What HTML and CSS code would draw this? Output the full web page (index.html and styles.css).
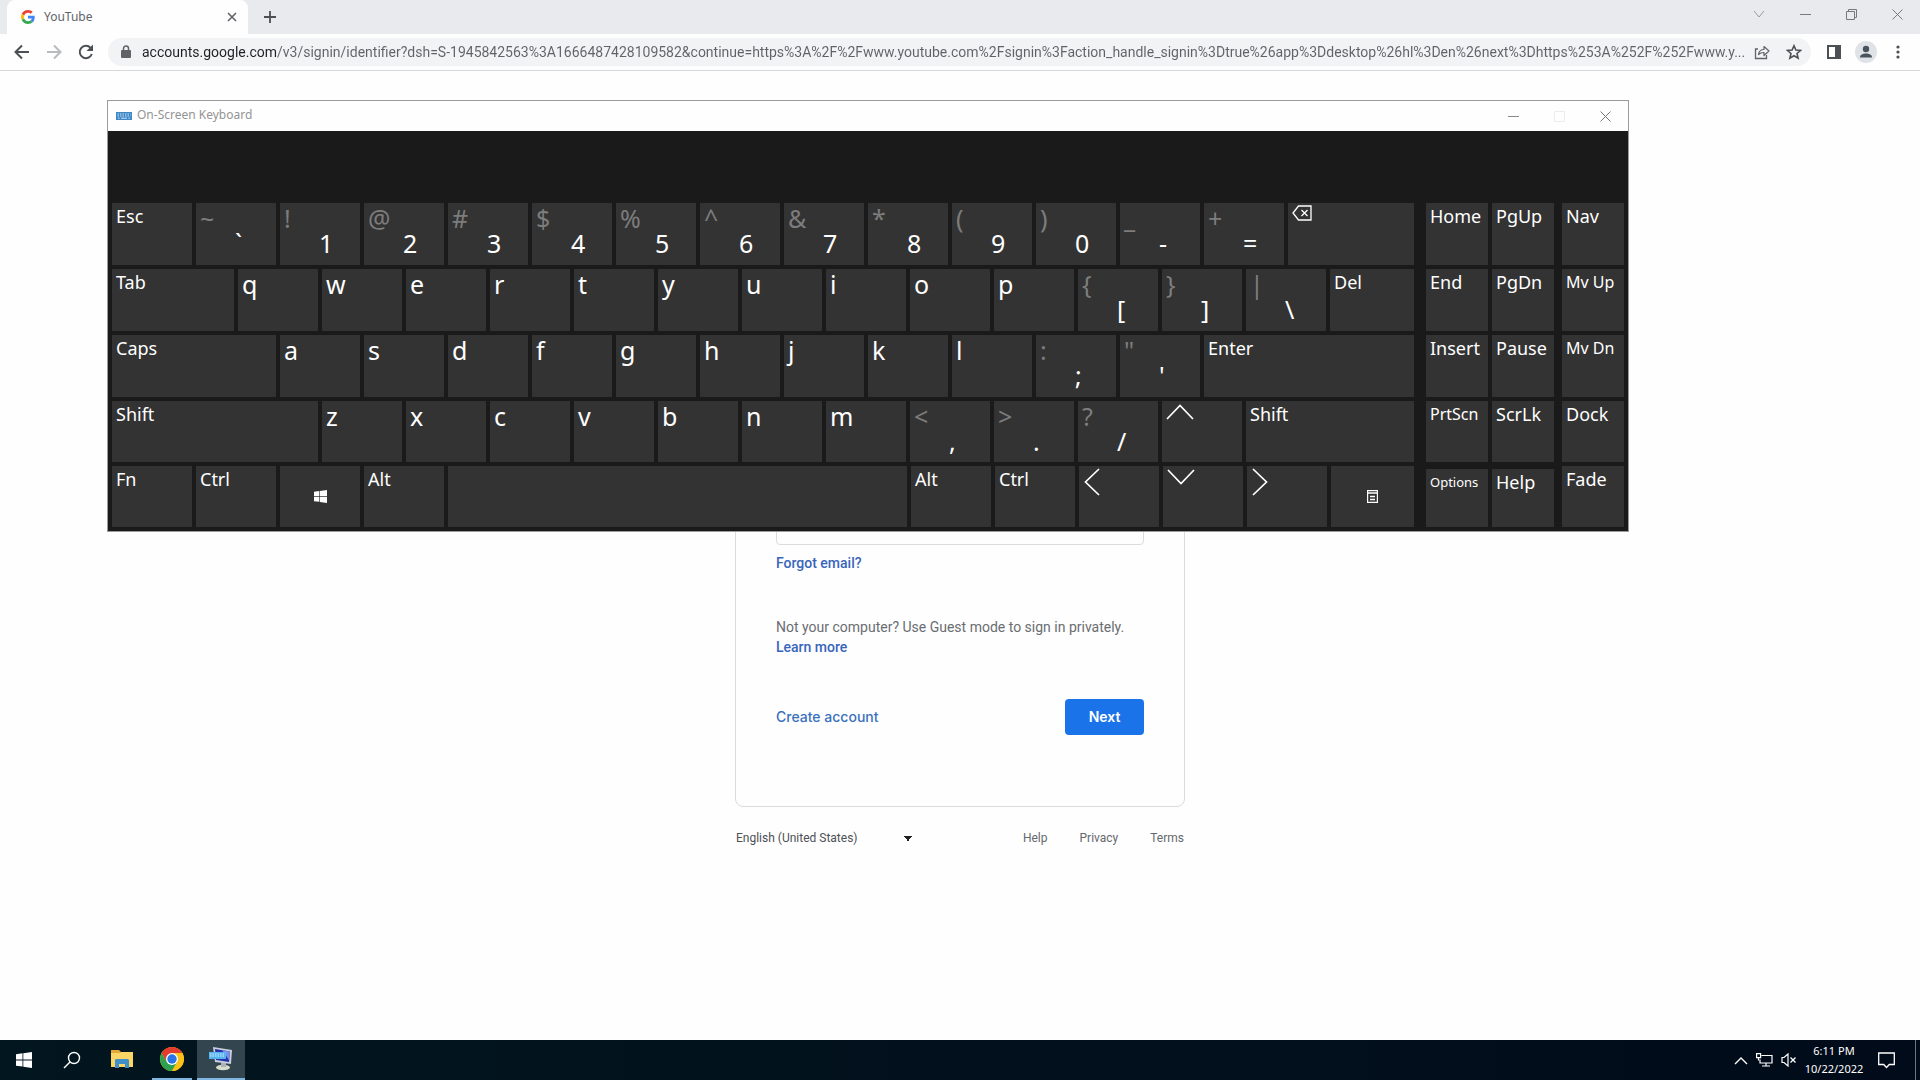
FILE: index.html
```html
<!DOCTYPE html>
<html lang="en">
<head>
<meta charset="utf-8">
<title>YouTube</title>
<link rel="stylesheet" href="styles.css">
</head>
<body>
<div class="desktop">
  <header class="browser">
    <div class="tabstrip">
      <div class="tab">
        <svg class="favicon" viewBox="0 0 48 48" width="14" height="14"><path fill="#ea4335" d="M24 9.5c3.54 0 6.71 1.22 9.21 3.6l6.85-6.85C35.9 2.38 30.47 0 24 0 14.62 0 6.51 5.38 2.56 13.22l7.98 6.19C12.43 13.72 17.74 9.5 24 9.5z"/><path fill="#4285f4" d="M46.98 24.55c0-1.57-.15-3.09-.38-4.55H24v9.02h12.94c-.58 2.96-2.26 5.48-4.78 7.18l7.73 6c4.51-4.18 7.09-10.36 7.09-17.65z"/><path fill="#fbbc05" d="M10.53 28.59A14.5 14.5 0 0 1 9.77 24c0-1.6.27-3.14.76-4.59l-7.98-6.19A23.9 23.9 0 0 0 0 24c0 3.88.92 7.54 2.56 10.78z"/><path fill="#34a853" d="M24 48c6.48 0 11.93-2.13 15.89-5.81l-7.73-6c-2.15 1.45-4.92 2.3-8.16 2.3-6.26 0-11.57-4.22-13.47-9.91l-7.98 6.19C6.51 42.62 14.62 48 24 48z"/></svg>
        <span class="tab-title">YouTube</span>
        <button class="icon-btn" aria-label="Close tab"><svg width="10" height="10" viewBox="0 0 10 10"><path d="M1 1l8 8M9 1L1 9" stroke="#5f6368" stroke-width="1.6"/></svg></button>
      </div>
      <button class="icon-btn new-tab" aria-label="New tab"><svg width="12" height="12" viewBox="0 0 12 12"><path d="M6 0v12M0 6h12" stroke="#4c5054" stroke-width="1.8"/></svg></button>
      <div class="win-controls">
        <button class="win-btn" aria-label="Search tabs"><svg width="12" height="8" viewBox="0 0 12 8"><path d="M1 1l5 6 5-6" fill="none" stroke="#999b9f"/></svg></button>
        <button class="win-btn" aria-label="Minimize"><svg width="11" height="11" viewBox="0 0 11 11"><path d="M0 5.5h11" stroke="#77797d"/></svg></button>
        <button class="win-btn" aria-label="Restore"><svg width="11" height="11" viewBox="0 0 11 11"><path d="M.5 2.5h8v8h-8zM2.500 2.500v-2h8v8h-2" fill="none" stroke="#77797d"/></svg></button>
        <button class="win-btn" aria-label="Close"><svg width="11" height="11" viewBox="0 0 11 11"><path d="M.5.5l10 10M10.500.5l-10 10" stroke="#77797d"/></svg></button>
      </div>
    </div>
    <div class="toolbar">
      <button class="tool-btn" aria-label="Back"><svg width="16" height="16" viewBox="0 0 16 16"><path d="M15 8H2M8 1.500L1.500 8 8 14.500" fill="none" stroke="#4c5054" stroke-width="2"/></svg></button>
      <button class="tool-btn" aria-label="Forward"><svg width="16" height="16" viewBox="0 0 16 16"><path d="M1 8h13M8 1.500L14.500 8 8 14.500" fill="none" stroke="#b9bbbe" stroke-width="2"/></svg></button>
      <button class="tool-btn" aria-label="Reload"><svg width="16" height="16" viewBox="0 0 16 16"><path d="M13.800 10A6.200 6.200 0 1 1 12.600 3.800" fill="none" stroke="#4c5054" stroke-width="2"/><path d="M15 .5v6.500H8.500z" fill="#4c5054"/></svg></button>
      <div class="omnibox">
        <svg width="10" height="14" viewBox="0 0 10 14"><path d="M1 5h8a1 1 0 0 1 1 1v6a1 1 0 0 1-1 1H1a1 1 0 0 1-1-1V6a1 1 0 0 1 1-1z" fill="#5f6368"/><path d="M2.500 5.500V3.500a2.500 2.500 0 0 1 5 0v2" fill="none" stroke="#5f6368" stroke-width="1.500"/></svg>
        <input class="url" type="text" aria-label="Address" value="accounts.google.com/v3/signin/identifier?dsh=S-1945842563%3A1666487428109582&amp;continue=https%3A%2F%2Fwww.youtube.com%2Fsignin%3Faction_handle_signin%3Dtrue%26app%3Ddesktop%26hl%3Den%26next%3Dhttps%253A%252F%252Fwww.y...">
        <button class="tool-btn" aria-label="Share"><svg width="16" height="16" viewBox="0 0 16 16"><path d="M4 5H1.500v9.500h11V11" fill="none" stroke="#5f6368" stroke-width="1.300"/><path d="M4.500 10.500c.5-3.500 2.500-5 5.500-5V2.500l5 4.500-5 4.500V8.500c-2.500 0-4 .5-5.500 2z" fill="none" stroke="#5f6368" stroke-width="1.200" stroke-linejoin="round"/></svg></button>
        <button class="tool-btn" aria-label="Bookmark"><svg width="16" height="16" viewBox="0 0 16 16"><path d="M8 1.800l1.900 4.300 4.600.4-3.500 3 1.100 4.600L8 11.700l-4.100 2.400L5 9.500l-3.500-3 4.600-.4z" fill="none" stroke="#4c5054" stroke-width="1.600"/></svg></button>
      </div>
      <button class="tool-btn tool-wide" aria-label="Side panel"><svg width="14" height="14" viewBox="0 0 14 14"><path d="M1 1h12v12H1z" fill="none" stroke="#4c5054" stroke-width="2"/><path d="M8 1h5v12H8z" fill="#4c5054"/></svg></button>
      <button class="tool-btn" aria-label="Profile"><svg width="22" height="22" viewBox="0 0 22 22"><circle cx="11" cy="11" r="11" fill="#dfe2e6"/><circle cx="11" cy="8" r="3.200" fill="#47535f"/><path d="M5 16.500c0-3 3-4 6-4s6 1 6 4z" fill="#47535f"/></svg></button>
      <button class="tool-btn" aria-label="Menu"><svg width="4" height="14" viewBox="0 0 4 14"><g fill="#4c5054"><circle cx="2" cy="2" r="1.600"/><circle cx="2" cy="7" r="1.600"/><circle cx="2" cy="12" r="1.600"/></g></svg></button>
    </div>
  </header>

  <main class="page">
    <form class="card">
      <input class="email" type="email" aria-label="Email or phone">
      <a class="link" href="#">Forgot email?</a>
      <p class="note">Not your computer? Use Guest mode to sign in privately.<br><a class="link" href="#">Learn more</a></p>
      <div class="actions">
        <a class="create" href="#">Create account</a>
        <button class="next" type="button">Next</button>
      </div>
    </form>
    <footer class="footer">
      <select class="lang" aria-label="Language"><option>English (United States)</option></select>
      <nav class="foot-links"><a href="#">Help</a><a href="#">Privacy</a><a href="#">Terms</a></nav>
    </footer>
  </main>

  <section class="osk" aria-label="On-Screen Keyboard">
    <div class="osk-title">
      <svg width="16" height="8" viewBox="0 0 16 8"><path fill="#3f87c5" d="M0 0h16v8H0z"/><path d="M1.500 2h13M1.500 4h13" stroke="#cfe4f5" stroke-dasharray="1.500 1"/><path d="M2 6.200h1.500M5 6.200h6M12.500 6.200H14" stroke="#cfe4f5"/></svg>
      <span class="osk-name">On-Screen Keyboard</span>
      <button class="win-btn" aria-label="Minimize"><svg width="11" height="11" viewBox="0 0 11 11"><path d="M0 5.500h11" stroke="#8a8a8a"/></svg></button>
      <button class="win-btn" aria-label="Maximize" disabled><svg width="11" height="11" viewBox="0 0 11 11"><path d="M.5.5h10v10H.5z" fill="none" stroke="#ececec"/></svg></button>
      <button class="win-btn" aria-label="Close"><svg width="11" height="11" viewBox="0 0 11 11"><path d="M.5.5l10 10M10.500.5l-10 10" stroke="#777"/></svg></button>
    </div>
    <div class="osk-body">
      <div class="block block-main">
        <div class="row">
          <button class="key">Esc</button>
          <button class="key char"><i>~</i><b>`</b></button>
          <button class="key char"><i>!</i><b>1</b></button>
          <button class="key char"><i>@</i><b>2</b></button>
          <button class="key char"><i>#</i><b>3</b></button>
          <button class="key char"><i>$</i><b>4</b></button>
          <button class="key char"><i>%</i><b>5</b></button>
          <button class="key char"><i>^</i><b>6</b></button>
          <button class="key char"><i>&amp;</i><b>7</b></button>
          <button class="key char"><i>*</i><b>8</b></button>
          <button class="key char"><i>(</i><b>9</b></button>
          <button class="key char"><i>)</i><b>0</b></button>
          <button class="key char"><i>_</i><b>-</b></button>
          <button class="key char"><i>+</i><b>=</b></button>
          <button class="key k-back" aria-label="Backspace"><svg width="20" height="16" viewBox="0 0 20 16"><path d="M6.500 1H19v14H6.500L1 8z" fill="none" stroke="#fff" stroke-width="1.300"/><path d="M9.500 5l6 6M15.500 5l-6 6" stroke="#fff" stroke-width="1.300"/></svg></button>
        </div>
        <div class="row">
          <button class="key k-tab">Tab</button>
          <button class="key char">q</button>
          <button class="key char">w</button>
          <button class="key char">e</button>
          <button class="key char">r</button>
          <button class="key char">t</button>
          <button class="key char">y</button>
          <button class="key char">u</button>
          <button class="key char">i</button>
          <button class="key char">o</button>
          <button class="key char">p</button>
          <button class="key char"><i>{</i><b>[</b></button>
          <button class="key char"><i>}</i><b>]</b></button>
          <button class="key char"><i>|</i><b>\</b></button>
          <button class="key k-del">Del</button>
        </div>
        <div class="row">
          <button class="key k-caps">Caps</button>
          <button class="key char">a</button>
          <button class="key char">s</button>
          <button class="key char">d</button>
          <button class="key char">f</button>
          <button class="key char">g</button>
          <button class="key char">h</button>
          <button class="key char">j</button>
          <button class="key char">k</button>
          <button class="key char">l</button>
          <button class="key char"><i>:</i><b>;</b></button>
          <button class="key char"><i>"</i><b>'</b></button>
          <button class="key k-enter">Enter</button>
        </div>
        <div class="row">
          <button class="key k-lshift">Shift</button>
          <button class="key char">z</button>
          <button class="key char">x</button>
          <button class="key char">c</button>
          <button class="key char">v</button>
          <button class="key char">b</button>
          <button class="key char">n</button>
          <button class="key char">m</button>
          <button class="key char"><i>&lt;</i><b>,</b></button>
          <button class="key char"><i>&gt;</i><b>.</b></button>
          <button class="key char"><i>?</i><b>/</b></button>
          <button class="key" aria-label="Up"><svg width="28" height="18" viewBox="0 0 28 18"><path d="M1 16L14 2.500 27 16" fill="none" stroke="#fff" stroke-width="1.700"/></svg></button>
          <button class="key k-rshift">Shift</button>
        </div>
        <div class="row">
          <button class="key">Fn</button>
          <button class="key">Ctrl</button>
          <button class="key centered" aria-label="Windows"><svg width="13" height="13" viewBox="0 0 16 16"><path fill="#fff" d="M0 2.200l6.500-.9v6.200H0zM7.300 1.200L16 0v7.500H7.300zM0 8.400h6.500v6.200L0 13.700zM7.300 8.400H16V16l-8.700-1.200z"/></svg></button>
          <button class="key">Alt</button>
          <button class="key k-space" aria-label="Space"></button>
          <button class="key">Alt</button>
          <button class="key">Ctrl</button>
          <button class="key" aria-label="Left"><svg width="18" height="28" viewBox="0 0 18 28"><path d="M16 1L2.500 14 16 27" fill="none" stroke="#fff" stroke-width="1.700"/></svg></button>
          <button class="key" aria-label="Down"><svg width="28" height="18" viewBox="0 0 28 18"><path d="M1 2l13 13.500L27 2" fill="none" stroke="#fff" stroke-width="1.700"/></svg></button>
          <button class="key" aria-label="Right"><svg width="18" height="28" viewBox="0 0 18 28"><path d="M2 1l13.500 13L2 27" fill="none" stroke="#fff" stroke-width="1.700"/></svg></button>
          <button class="key k-menu centered" aria-label="Menu"><svg width="11" height="13" viewBox="0 0 11 13"><path d="M.5.5h10v12H.5zM0 3h11M3 6.500h5M3 9.500h5" fill="none" stroke="#fff" stroke-width="1.400"/></svg></button>
        </div>
      </div>
      <div class="block block-nav">
        <div class="row"><button class="key">Home</button><button class="key">PgUp</button></div>
        <div class="row"><button class="key">End</button><button class="key">PgDn</button></div>
        <div class="row"><button class="key">Insert</button><button class="key">Pause</button></div>
        <div class="row"><button class="key medium">PrtScn</button><button class="key">ScrLk</button></div>
        <div class="row row-low"><button class="key small">Options</button><button class="key">Help</button></div>
      </div>
      <div class="block block-dock">
        <div class="row"><button class="key">Nav</button></div>
        <div class="row"><button class="key medium">Mv Up</button></div>
        <div class="row"><button class="key medium">Mv Dn</button></div>
        <div class="row"><button class="key">Dock</button></div>
        <div class="row"><button class="key">Fade</button></div>
      </div>
    </div>
  </section>

  <div class="taskbar">
    <button class="task" aria-label="Start"><svg width="16" height="16" viewBox="0 0 16 16"><path fill="#fff" d="M0 2.200l6.500-.9v6.200H0zM7.300 1.200L16 0v7.500H7.300zM0 8.400h6.500v6.200L0 13.700zM7.300 8.400H16V16l-8.700-1.200z"/></svg></button>
    <button class="task" aria-label="Search"><svg width="18" height="18" viewBox="0 0 18 18"><circle cx="11" cy="7" r="5.500" fill="none" stroke="#fff" stroke-width="1.400"/><path d="M7 11l-6 6" stroke="#fff" stroke-width="1.500"/></svg></button>
    <button class="task task-app" aria-label="File Explorer"><svg width="22" height="20" viewBox="0 0 22 20"><path fill="#e3a83a" d="M0 1h8l2 2h11v5H0z"/><path fill="#fbd667" d="M0 4h9l1.500-1H22v15H0z"/><path fill="#3f8fc9" d="M4 19v-8l1-1h12l1 1v8h-4v-4H8v4z"/></svg></button>
    <button class="task task-app running" aria-label="Chrome"><svg width="24" height="24" viewBox="0 0 24 24"><circle cx="12" cy="12" r="12" fill="#fbc116"/><path fill="#e33b2e" d="M1.610 6A12 12 0 0 1 22.390 6H12v6L6.800 15z"/><path fill="#2da14f" d="M1.610 6A12 12 0 0 0 12 24l5.200-9L12 12l-5.200 3z"/><path fill="#fbc116" d="M22.390 6A12 12 0 0 1 12 24l5.200-9A6 6 0 0 0 17.200 9L12 6z"/><circle cx="12" cy="12" r="6" fill="#fff"/><circle cx="12" cy="12" r="4.700" fill="#2a74e8"/></svg></button>
    <button class="task task-app running active" aria-label="On-Screen Keyboard"><svg width="24" height="24" viewBox="0 0 24 24"><path fill="#c9d0dc" d="M4 0l19 3-1 14-16-2z"/><path fill="#2530a8" d="M6 2l15 2.500-1 10.500L7 13z"/><path fill="#7d8fe6" d="M13 3l8 1.500-.8 9z"/><ellipse cx="14" cy="20.500" rx="7" ry="2.800" fill="#d8dccb"/><path fill="#aab2b8" d="M12 16h5v4h-5z"/><path fill="#55b4f0" d="M0 5h17v7H0z"/><path d="M1 7h15M1 9h15" stroke="#d6efff" stroke-dasharray="1.500 1"/></svg></button>
    <div class="tray">
      <svg width="14" height="9" viewBox="0 0 14 9"><path d="M1 8l6-6 6 6" fill="none" stroke="#fff" stroke-width="1.400"/></svg>
      <svg width="17" height="14" viewBox="0 0 17 14"><path d="M5.500 2.500h10.500v7.500H4V6.500M10 10v3M6 13h8M.6.6h4v4h-4zM2.500 4.500v3" fill="none" stroke="#fff" stroke-width="1.200"/></svg>
      <svg width="16" height="14" viewBox="0 0 16 14"><path d="M1 4.500h2L7 1v12L3 9.500H1z" fill="none" stroke="#fff" stroke-width="1.200"/><path d="M9.500 4.500l5 5M14.500 4.500l-5 5" stroke="#fff" stroke-width="1.300"/></svg>
      <div class="clock"><span>6:11 PM</span><span>10/22/2022</span></div>
      <svg class="notify" width="17" height="17" viewBox="0 0 17 17"><path d="M.7 1h15.600v11.500h-5L8.500 15.500 5.700 12.500h-5z" fill="none" stroke="#fff" stroke-width="1.300"/></svg>
      <button class="peek" aria-label="Show desktop"></button>
    </div>
  </div>
</div>
</body>
</html>
```
FILE: styles.css
```css
* { box-sizing: border-box; }
body { margin: 0; font-family: "Noto Sans", "Open Sans", sans-serif; background: #fefefe; }
button { border: 0; padding: 0; margin: 0; background: none; font: inherit; color: inherit; }
svg { display: block; flex: none; }
a { text-decoration: none; }

.desktop { position: relative; display: flex; flex-direction: column; min-height: 100vh; overflow: hidden; }

/* Browser chrome */
.tabstrip { display: flex; align-items: center; height: 34px; padding-left: 7px; background: #e8eaed; }
.tab { display: flex; align-items: center; width: 241px; height: 34px; padding: 0 11px 0 14px; background: #fefefe; border-radius: 8px 8px 0 0; }
.tab-title { flex: 1; margin-left: 9px; font-size: 12px; line-height: 18px; color: #5f6368; }
.icon-btn { display: grid; place-items: center; }
.new-tab { margin-left: 16px; }
.win-controls { display: flex; align-self: flex-start; margin-left: auto; }
.win-btn { display: grid; place-items: center; width: 46px; height: 28px; }

.toolbar { display: flex; align-items: center; height: 37px; padding: 0 6px; border-bottom: 1px solid #d5d7d9; background: #fefefe; }
.tool-btn { display: grid; place-items: center; width: 32px; height: 28px; flex: none; }
.tool-wide { margin-left: 7px; }
.omnibox { display: flex; align-items: center; flex: 1; min-width: 0; height: 28px; margin-left: 6px; padding: 0 1px 0 13px; border-radius: 14px; background: #f1f3f4; }
.url { flex: 1; min-width: 0; margin-left: 11px; padding: 0; border: 0; outline: 0; font: 14px Roboto, sans-serif; color: transparent; background: linear-gradient(90deg, #202124 134px, #5f6368 134px); -webkit-background-clip: text; background-clip: text; }

/* Sign-in page */
.page { flex: 1; display: flex; flex-direction: column; align-items: center; padding-top: 129px; font-family: Roboto, sans-serif; }
.card { display: flex; flex-direction: column; align-items: flex-start; width: 450px; height: 607px; padding: 288px 40px 0; border: 1px solid #dadce0; border-radius: 8px; }
.email { width: 100%; height: 56px; border: 1px solid #dadce0; border-radius: 4px; background: none; }
.link { font-size: 14px; line-height: 20px; font-weight: 500; color: #3865bb; }
.card > .link { margin-top: 8px; }
.note { margin: 44px 0 0; font-size: 14px; line-height: 20px; color: #6a6d71; }
.actions { display: flex; align-items: center; justify-content: space-between; width: 100%; margin-top: 42px; }
.create { font: 500 14px/20px Inter, sans-serif; color: #3a70bd; }
.next { width: 79px; height: 36px; border-radius: 4px; background: #1a73e8; color: #fff; font: 600 14px/20px Inter, sans-serif; }
.footer { display: flex; align-items: center; justify-content: space-between; width: 450px; padding: 20px 1px 0; font-size: 12px; }
.lang { width: 180px; height: 22px; padding: 0; border: 0; appearance: none; font: 12px Roboto, sans-serif; color: #4d5054; background: linear-gradient(to bottom right, #202124 50%, transparent 50%) 172px 9px / 5px 5px no-repeat, linear-gradient(to bottom left, #202124 50%, transparent 50%) 167px 9px / 5px 5px no-repeat; }
.foot-links { display: flex; gap: 32px; }
.foot-links a { color: #65686c; }

/* On-screen keyboard window */
.osk { position: absolute; left: 107px; top: 100px; width: 1522px; border: 1px solid #9b9b9b; background: #fefefe; }
.osk-title { display: flex; align-items: center; height: 30px; padding-left: 8px; }
.osk-name { flex: 1; margin-left: 5px; font-size: 12px; line-height: 18px; padding-bottom: 2px; color: #949494; }
.osk-body { display: flex; gap: 8px; padding: 72px 4px 4px; background: #1a1a1a; }
.block { display: flex; flex-direction: column; gap: 4px; }
.block-main { flex: 1; margin-right: 4px; }
.block-nav { width: 128px; }
.block-dock { width: 62px; }
.row { display: flex; gap: 4px; height: 62px; }
.row:nth-child(n+4) { height: 61px; }
.row-low { padding-top: 3px; }
.key { display: flex; flex-direction: column; align-items: flex-start; justify-content: flex-start; flex: 1 1 80px; min-width: 0; padding: 2px 4px 0; background: #333; color: #fff; font-size: 18px; line-height: 22px; text-align: left; white-space: nowrap; }
.char { padding-top: 3px; font-size: 25px; line-height: 25px; }
.char i { font-style: normal; color: #7d7d7d; }
.char b { font-weight: 400; margin-left: 35px; }
.medium { font-size: 16px; }
.small { font-size: 13px; }
.centered { align-items: center; justify-content: center; padding: 0; }
.k-back { flex-basis: 126px; }
.k-tab { flex-basis: 122px; }
.k-del { flex-basis: 84px; }
.k-caps { flex-basis: 164px; }
.k-enter { flex-basis: 210px; }
.k-lshift { flex-basis: 206px; }
.k-rshift { flex-basis: 168px; }
.k-space { flex-basis: 459px; }
.k-menu { flex-basis: 83px; }

/* Taskbar */
.taskbar { display: flex; height: 40px; background: linear-gradient(90deg, #02161f, #010b1a); color: #fff; }
.task { display: grid; place-items: center; width: 48px; height: 40px; }
.task-app { width: 52px; border-bottom: 2px solid transparent; }
.running { width: 40px; margin: 0 5px 0 4px; border-bottom-color: #7fb6e2; }
.active { width: 48px; margin: 0; background: #33454f; }
.tray { display: flex; align-items: center; margin-left: auto; }
.tray > svg + svg { margin-left: 8px; }
.clock { display: flex; flex-direction: column; align-items: center; width: 74px; font-size: 11px; line-height: 18px; }
.notify { margin: 0 20px 0 7px; }
.peek { width: 5px; height: 40px; border-left: 1px solid #6d7680; }
```
